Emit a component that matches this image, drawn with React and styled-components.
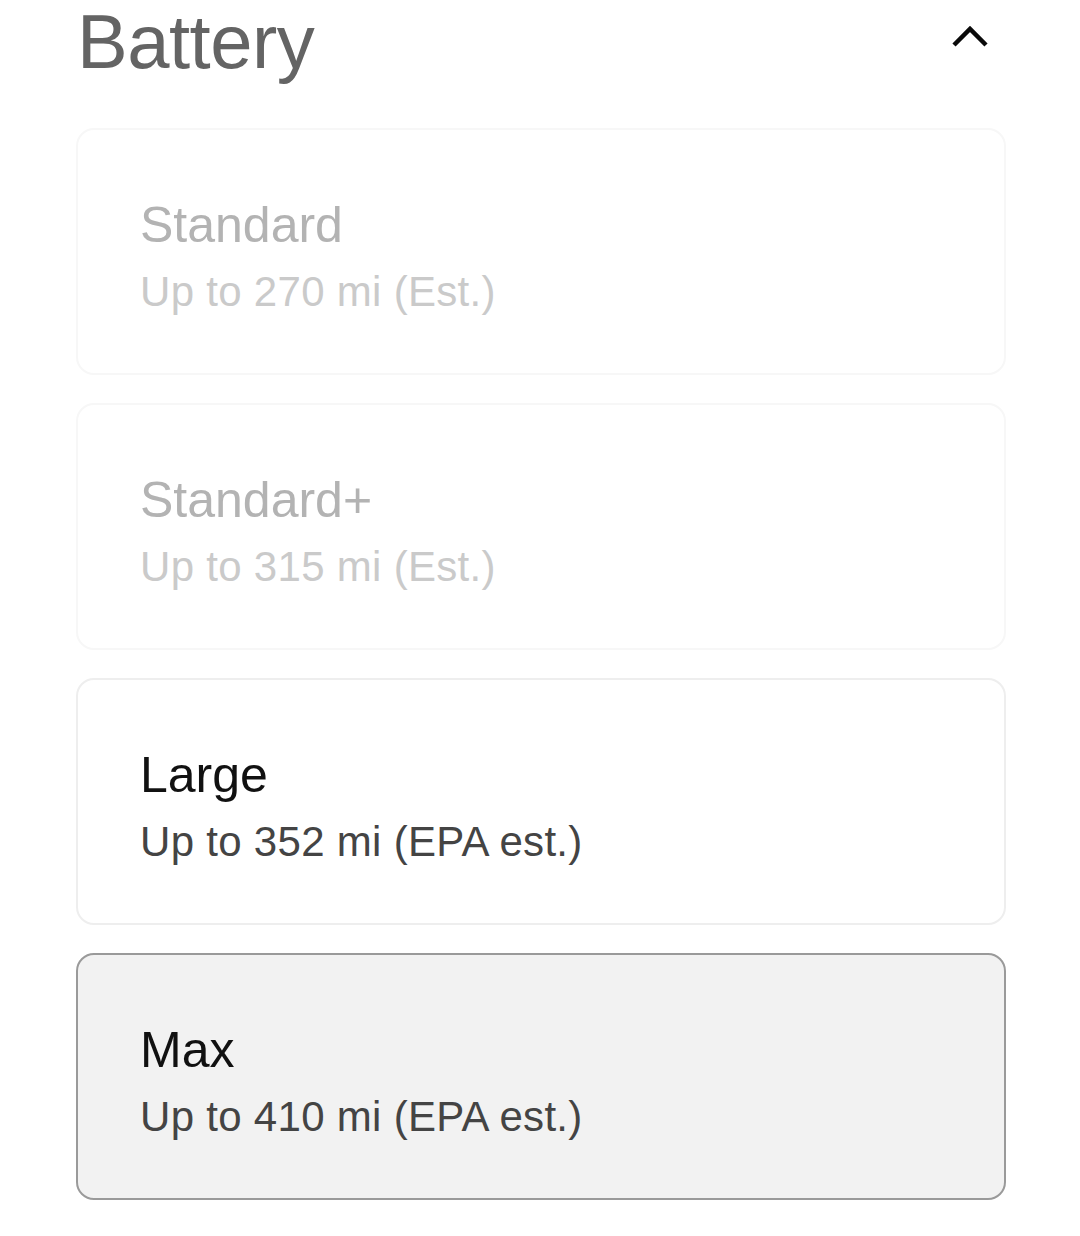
import React from "react"
import styled, { createGlobalStyle } from "styled-components"

const GlobalStyle = createGlobalStyle`
  html, body {
    margin: 0;
    padding: 0;
    background: #ffffff;
  }
  body {
    font-family: "Liberation Sans", Arial, sans-serif;
    -webkit-font-smoothing: antialiased;
  }
`

const Page = styled.div`
  display: flex;
  flex-flow: column;
  padding: 0 74px 0 76px;
  width: 100%;
  box-sizing: border-box;
`

const Header = styled.div`
  display: flex;
  justify-content: space-between;
  align-items: flex-start;
  margin-bottom: 44px;
`

const Title = styled.h1`
  margin: 0 0 0 1px;
  font-size: 76px;
  line-height: 84px;
  font-weight: 400;
  color: #646464;
  letter-spacing: -0.5px;
`

const ToggleButton = styled.button`
  display: flex;
  margin: 24px 16px 0 0;
  padding: 0;
  border: none;
  background: none;
  cursor: pointer;
`

const OptionList = styled.div`
  display: flex;
  flex-flow: column;
  gap: 28px;
`

const OptionCard = styled.div`
  display: flex;
  flex-flow: column;
  gap: 12px;
  height: 247px;
  box-sizing: border-box;
  padding: 65px 62px 0;
  border-radius: 18px;
  border: 2px solid
    ${(props) =>
      props.selected ? "#9a9a9a" : props.disabled ? "#f7f7f7" : "#eeeeee"};
  background: ${(props) => (props.selected ? "#f2f2f2" : "#ffffff")};
  cursor: ${(props) => (props.disabled ? "default" : "pointer")};
`

const OptionName = styled.div`
  font-size: 50px;
  line-height: 60px;
  color: ${(props) => (props.disabled ? "#b3b3b3" : "#111111")};
`

const OptionRange = styled.div`
  font-size: 42px;
  line-height: 50px;
  letter-spacing: 0.3px;
  color: ${(props) => (props.disabled ? "#cacaca" : "#444444")};
`

function ChevronUp() {
  return (
    <svg width="40" height="26" viewBox="0 0 40 26" fill="none">
      <polyline
        points="4,21 20,5 36,21"
        stroke="#0a0a0a"
        strokeWidth="4.5"
        strokeLinecap="butt"
        strokeLinejoin="miter"
      />
    </svg>
  )
}

const batteryOptions = [
  { name: "Standard", range: "Up to 270 mi (Est.)", disabled: true },
  { name: "Standard+", range: "Up to 315 mi (Est.)", disabled: true },
  { name: "Large", range: "Up to 352 mi (EPA est.)" },
  { name: "Max", range: "Up to 410 mi (EPA est.)", selected: true },
]

export default function App() {
  return (
    <>
      <GlobalStyle />
      <Page>
        <Header>
          <Title>Battery</Title>
          <ToggleButton aria-label="Collapse">
            <ChevronUp />
          </ToggleButton>
        </Header>
        <OptionList>
          {batteryOptions.map((option) => (
            <OptionCard
              key={option.name}
              disabled={option.disabled}
              selected={option.selected}
            >
              <OptionName disabled={option.disabled}>{option.name}</OptionName>
              <OptionRange disabled={option.disabled}>{option.range}</OptionRange>
            </OptionCard>
          ))}
        </OptionList>
      </Page>
    </>
  )
}
